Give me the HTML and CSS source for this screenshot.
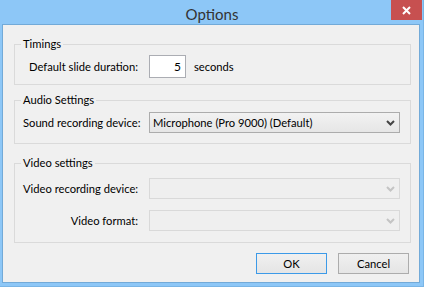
FILE: index.html
```html
<!DOCTYPE html>
<html>
<head>
    <meta charset="UTF-8">
    <title>Options</title>
    <link rel="stylesheet" href="styles.css">
</head>
<body>
    <div class="window">
        <div class="titlebar">
            <span class="title">Options</span>
            <button type="button" class="close-btn" aria-label="Close">
                <svg width="9" height="9" viewBox="0 0 9 9">
                    <path d="M1 1 L8 8 M8 1 L1 8" stroke="#fff" stroke-width="2" fill="none"/>
                </svg>
            </button>
        </div>

        <div class="content">
            <fieldset class="group group-timings">
                <legend>Timings</legend>
                <div class="row">
                    <label class="field-label" for="duration">Default slide duration:</label>
                    <input type="text" id="duration" class="num-input" value="5">
                    <span class="unit">seconds</span>
                </div>
            </fieldset>

            <fieldset class="group group-audio">
                <legend>Audio Settings</legend>
                <div class="row">
                    <span class="field-label">Sound recording device:</span>
                    <div class="combo">
                        <span class="combo-text">Microphone (Pro 9000) (Default)</span>
                        <svg class="chevron" width="9" height="6" viewBox="0 0 9 6">
                            <path d="M1 1 L4.5 4.5 L8 1" stroke="currentColor" stroke-width="2" fill="none"/>
                        </svg>
                    </div>
                </div>
            </fieldset>

            <fieldset class="group group-video">
                <legend>Video settings</legend>
                <div class="row">
                    <span class="field-label">Video recording device:</span>
                    <div class="combo disabled">
                        <span class="combo-text"></span>
                        <svg class="chevron" width="9" height="6" viewBox="0 0 9 6">
                            <path d="M1 1 L4.5 4.5 L8 1" stroke="currentColor" stroke-width="2" fill="none"/>
                        </svg>
                    </div>
                </div>
                <div class="row row-gap">
                    <span class="field-label">Video format:</span>
                    <div class="combo disabled">
                        <span class="combo-text"></span>
                        <svg class="chevron" width="9" height="6" viewBox="0 0 9 6">
                            <path d="M1 1 L4.5 4.5 L8 1" stroke="currentColor" stroke-width="2" fill="none"/>
                        </svg>
                    </div>
                </div>
            </fieldset>

            <div class="buttons">
                <button type="button" class="btn btn-default">OK</button>
                <button type="button" class="btn">Cancel</button>
            </div>
        </div>
    </div>
</body>
</html>
```

FILE: styles.css
```css
html, body {
    margin: 0;
    padding: 0;
}
body {
    font-family: Lato, "Liberation Sans", sans-serif;
    font-size: 11.2px;
    color: #000;
    background: #8dc7f7;
}
.window {
    width: 424px;
    height: 287px;
    box-sizing: border-box;
    padding: 0 3px 3px 2px;
    background: #8dc7f7;
    border-right: 1px solid #79b5e6;
    border-bottom: 1px solid #79b5e6;
    display: flex;
    flex-direction: column;
}
.titlebar {
    height: 24px;
    display: grid;
    grid-template-columns: 1fr auto 1fr;
    align-items: start;
    margin-right: -2px;
}
.title {
    grid-column: 2;
    font-size: 15px;
    line-height: 24px;
    color: #333;
    padding-top: 2px;
}
.close-btn {
    grid-column: 3;
    justify-self: end;
    width: 31px;
    height: 20px;
    padding: 0;
    border: none;
    background: #c75050;
    display: flex;
    align-items: center;
    justify-content: center;
}
.content {
    height: 260px;
    box-sizing: border-box;
    border: 1px solid #72aad8;
    background: #f0f0f0;
    padding: 11px 8px 0 11px;
}
.group {
    margin: 0;
    border: 1px solid #dadada;
    padding: 3px 10px 6px 8px;
    min-width: 0;
}
.group legend {
    padding: 0 2px;
    margin-left: -2px;
    line-height: 16px;
}
.group-audio {
    margin-top: 7px;
    padding-top: 4px;
    padding-bottom: 10px;
}
.group-video {
    margin-top: 11px;
    padding-top: 7px;
    padding-bottom: 11px;
}
.row {
    display: flex;
    align-items: center;
    gap: 11px;
}
.row-gap {
    margin-top: 11px;
}
.field-label {
    width: 115px;
    flex: none;
    text-align: right;
    white-space: nowrap;
}
.num-input {
    width: 37px;
    height: 23px;
    box-sizing: border-box;
    border: 1px solid #abadb3;
    background: #fff;
    padding: 0 4px 0 0;
    text-align: right;
    font: inherit;
    font-size: 12px;
    color: #000;
    margin-right: -3px;
}
.combo {
    width: 252px;
    height: 21px;
    box-sizing: border-box;
    border: 1px solid #acacac;
    background: linear-gradient(#f2f2f2, #e6e6e6);
    display: flex;
    align-items: center;
    padding: 0 4px 0 3px;
    color: #444;
}
.combo-text {
    flex: 1;
    color: #000;
    white-space: nowrap;
}
.combo.disabled {
    border-color: #d9d9d9;
    background: #efefef;
    color: #c4c4c4;
}
.buttons {
    display: flex;
    justify-content: flex-end;
    gap: 11px;
    margin-top: 10px;
    padding-right: 2px;
}
.btn {
    width: 71px;
    height: 21px;
    box-sizing: border-box;
    border: 1px solid #acacac;
    background: linear-gradient(#f0f0f0, #e5e5e5);
    font: inherit;
    color: #000;
    padding: 0;
}
.btn-default {
    border-color: #3c9ae8;
}
```
